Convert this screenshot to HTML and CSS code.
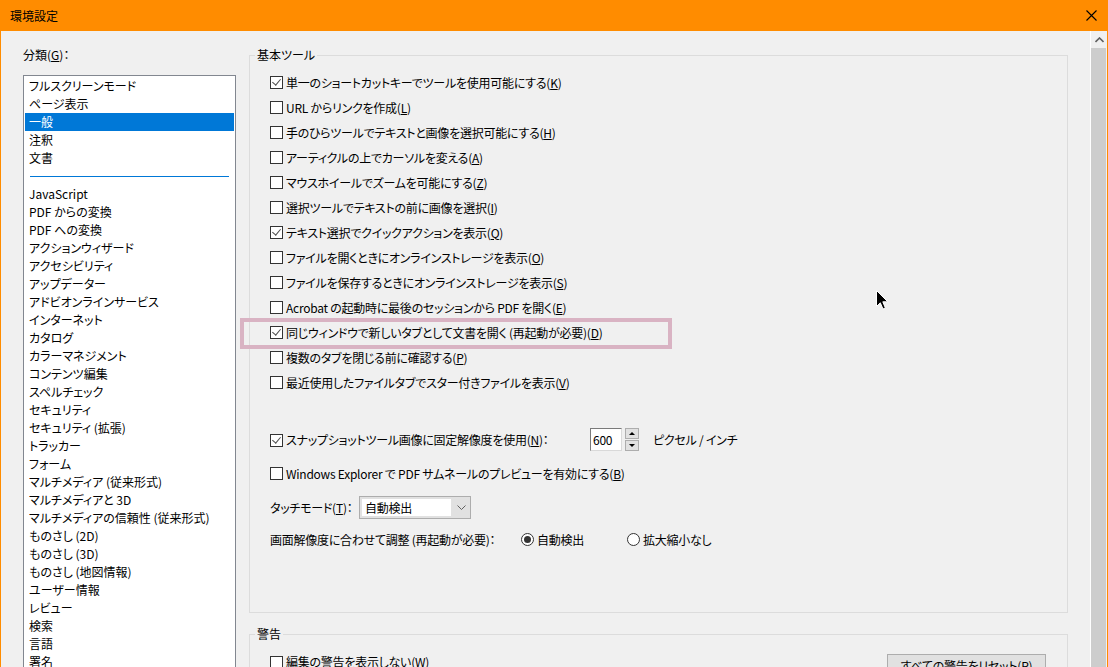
FILE: index.html
```html
<!DOCTYPE html>
<html lang="ja">
<head>
  <meta charset="UTF-8">
  <title>環境設定</title>
  <link rel="stylesheet" href="styles.css">
</head>
<body>
  <div class="window">
    <!-- Title bar -->
    <div class="titlebar">
      <span class="title">環境設定</span>
      <svg class="close" width="11" height="11" viewBox="0 0 11 11">
        <path d="M0.5 0.5 L10.5 10.5 M10.5 0.5 L0.5 10.5" stroke="#000" stroke-width="1.1" fill="none"/>
      </svg>
    </div>

    <div class="main">
      <!-- Categories -->
      <div class="sidebar">
        <div class="label">分類(<u>G</u>)：</div>
        <ul class="category-list">
          <li>フルスクリーンモード</li>
          <li>ページ表示</li>
          <li class="selected">一般</li>
          <li>注釈</li>
          <li>文書</li>
          <li class="separator"></li>
          <li>JavaScript</li>
          <li>PDF からの変換</li>
          <li>PDF への変換</li>
          <li>アクションウィザード</li>
          <li>アクセシビリティ</li>
          <li>アップデーター</li>
          <li>アドビオンラインサービス</li>
          <li>インターネット</li>
          <li>カタログ</li>
          <li>カラーマネジメント</li>
          <li>コンテンツ編集</li>
          <li>スペルチェック</li>
          <li>セキュリティ</li>
          <li>セキュリティ (拡張)</li>
          <li>トラッカー</li>
          <li>フォーム</li>
          <li>マルチメディア (従来形式)</li>
          <li>マルチメディアと 3D</li>
          <li>マルチメディアの信頼性 (従来形式)</li>
          <li>ものさし (2D)</li>
          <li>ものさし (3D)</li>
          <li>ものさし (地図情報)</li>
          <li>ユーザー情報</li>
          <li>レビュー</li>
          <li>検索</li>
          <li>言語</li>
          <li>署名</li>
        </ul>
      </div>

      <!-- Settings -->
      <div class="panel">
        <fieldset class="group">
          <legend>基本ツール</legend>
          <div class="option"><span class="cb checked"></span>単一のショートカットキーでツールを使用可能にする(<u>K</u>)</div>
          <div class="option"><span class="cb"></span>URL からリンクを作成(<u>L</u>)</div>
          <div class="option"><span class="cb"></span>手のひらツールでテキストと画像を選択可能にする(<u>H</u>)</div>
          <div class="option"><span class="cb"></span>アーティクルの上でカーソルを変える(<u>A</u>)</div>
          <div class="option"><span class="cb"></span>マウスホイールでズームを可能にする(<u>Z</u>)</div>
          <div class="option"><span class="cb"></span>選択ツールでテキストの前に画像を選択(<u>I</u>)</div>
          <div class="option"><span class="cb checked"></span>テキスト選択でクイックアクションを表示(<u>Q</u>)</div>
          <div class="option"><span class="cb"></span>ファイルを開くときにオンラインストレージを表示(<u>O</u>)</div>
          <div class="option"><span class="cb"></span>ファイルを保存するときにオンラインストレージを表示(<u>S</u>)</div>
          <div class="option"><span class="cb"></span>Acrobat の起動時に最後のセッションから PDF を開く(<u>E</u>)</div>
          <div class="option"><span class="cb checked"></span>同じウィンドウで新しいタブとして文書を開く (再起動が必要)(<u>D</u>)</div>
          <div class="option"><span class="cb"></span>複数のタブを閉じる前に確認する(<u>P</u>)</div>
          <div class="option"><span class="cb"></span>最近使用したファイルタブでスター付きファイルを表示(<u>V</u>)</div>

          <div class="option tall snapshot">
            <span class="snapshot-label"><span class="cb checked"></span>スナップショットツール画像に固定解像度を使用(<u>N</u>)：</span>
            <span class="spin-input">600</span>
            <span class="spin-buttons">
              <span class="spin-up"></span>
              <span class="spin-down"></span>
            </span>
            <span class="unit">ピクセル / インチ</span>
          </div>
          <div class="option tall"><span class="cb"></span>Windows Explorer で PDF サムネールのプレビューを有効にする(<u>B</u>)</div>
          <div class="option tall">
            <span class="touch-label">タッチモード(<u>T</u>)：</span>
            <span class="select">
              <span class="select-value">自動検出</span>
              <svg class="chevron" width="9" height="5" viewBox="0 0 9 5">
                <path d="M0.5 0.5 L4.5 4.5 L8.5 0.5" stroke="#606060" fill="none"/>
              </svg>
            </span>
          </div>
          <div class="option radio-row">
            <span class="radio-label">画面解像度に合わせて調整 (再起動が必要)：</span>
            <span class="radio checked"></span><span class="radio-text">自動検出</span>
            <span class="radio"></span><span class="radio-text">拡大縮小なし</span>
          </div>
        </fieldset>

        <fieldset class="group warning">
          <legend>警告</legend>
          <div class="option warning-row">
            <span><span class="cb"></span>編集の警告を表示しない(<u>W</u>)</span>
            <span class="button">すべての警告をリセット(<u>R</u>)</span>
          </div>
        </fieldset>
      </div>

      <!-- Scrollbar -->
      <div class="scrollbar">
        <div class="scroll-up">
          <svg width="9" height="6" viewBox="0 0 9 6">
            <path d="M0.5 5 L4.5 1 L8.5 5" stroke="#606060" stroke-width="1.6" fill="none"/>
          </svg>
        </div>
        <div class="scroll-thumb"></div>
      </div>
    </div>
  </div>

  <!-- Annotation and pointer on top of the dialog -->
  <div class="highlight"></div>
  <svg class="cursor" width="13" height="21" viewBox="0 0 13 21">
    <path d="M0.5 0.5 L0.5 16.5 L4.3 12.8 L7 19 L9.4 18 L6.8 11.8 L11.8 11.8 Z" fill="#000" stroke="#fff" stroke-width="1"/>
  </svg>
</body>
</html>
```

FILE: styles.css
```css
body {
  margin: 0;
  padding: 0;
  width: 1108px;
  height: 667px;
  overflow: hidden;
  font-family: "Noto Sans CJK JP", "Noto Sans", sans-serif;
  font-size: 12px;
  font-feature-settings: "palt";
  color: #000;
  background: #f0f0f0;
}

u {
  text-decoration: underline;
  text-underline-offset: 1px;
}

.window {
  height: 667px;
  border-left: 1px solid #ff8c00;
  border-right: 1px solid #ff8c00;
  background: #f0f0f0;
  display: flex;
  flex-direction: column;
}

/* Title bar */
.titlebar {
  height: 31px;
  flex: none;
  background: #ff8c00;
  display: flex;
  align-items: center;
  justify-content: space-between;
  padding: 0 10px 0 9px;
}

.title {
  font-size: 12px;
  line-height: 31px;
}

.main {
  flex: 1;
  display: flex;
  min-height: 0;
}

/* Category list */
.sidebar {
  width: 248px;
  flex: none;
  padding: 15px 0 0 22px;
  box-sizing: border-box;
}

.label {
  line-height: 18px;
  margin-bottom: 11px;
}

.category-list {
  list-style: none;
  margin: 0;
  padding: 1px;
  width: 213px;
  box-sizing: border-box;
  background: #fff;
  border: 1px solid #828790;
  height: 700px;
}

.category-list li {
  line-height: 18px;
  height: 18px;
  padding-left: 4px;
  white-space: nowrap;
}

.category-list .selected {
  background: #0078d7;
  color: #fff;
}

.category-list .separator {
  padding: 0;
  margin: 0 5px;
  display: flex;
  align-items: center;
}

.category-list .separator::after {
  content: "";
  flex: 1;
  height: 1px;
  background: #0078d7;
  margin-top: 1px;
}

/* Settings panel */
.panel {
  flex: 1;
  padding: 15px 22px 0 0;
  box-sizing: border-box;
}

.group {
  margin: 0;
  padding: 6px 0 58px 0;
  border: 1px solid #dcdcdc;
  min-width: 0;
  letter-spacing: -0.25px;
}

.group legend {
  padding: 0 2px;
  margin-left: 5px;
  line-height: 18px;
  letter-spacing: 0;
}

.group.warning {
  margin-top: 12px;
  padding-bottom: 20px;
}

.option {
  height: 25px;
  margin-left: 20px;
  display: flex;
  align-items: center;
  white-space: nowrap;
}

.option.tall {
  height: 34px;
}

.option.snapshot {
  margin-top: 27px;
}

.cb {
  display: inline-block;
  width: 13px;
  height: 13px;
  box-sizing: border-box;
  border: 1px solid #333;
  background: #fff;
  margin-right: 3px;
  vertical-align: -2px;
  position: relative;
  flex: none;
}

.cb.checked::after {
  content: "";
  position: absolute;
  left: 3px;
  top: 0px;
  width: 4px;
  height: 7px;
  border-right: 1.5px solid #4d4d4d;
  border-bottom: 1.5px solid #4d4d4d;
  transform: rotate(40deg);
}

/* Snapshot resolution */
.snapshot-label {
  width: 320px;
  flex: none;
}

.spin-input {
  width: 32px;
  height: 23px;
  box-sizing: border-box;
  border: 1px solid #7a7a7a;
  border-right-color: #d9d9d9;
  border-bottom-color: #d9d9d9;
  background: #fff;
  padding-left: 2px;
  line-height: 21px;
}

.spin-buttons {
  display: flex;
  flex-direction: column;
  width: 14px;
  height: 23px;
  margin-left: 3px;
  gap: 1px;
}

.spin-up,
.spin-down {
  flex: 1;
  background: #e1e1e1;
  border: 1px solid #adadad;
  position: relative;
}

.spin-up::after,
.spin-down::after {
  content: "";
  position: absolute;
  left: 3px;
  top: 3px;
  border-left: 3px solid transparent;
  border-right: 3px solid transparent;
}

.spin-up::after {
  border-bottom: 3px solid #000;
}

.spin-down::after {
  border-top: 3px solid #000;
}

.unit {
  margin-left: 14px;
}

/* Touch mode */
.touch-label {
  width: 89px;
  flex: none;
}

.select {
  width: 112px;
  height: 23px;
  box-sizing: border-box;
  border: 1px solid #adadad;
  background: #e1e1e1;
  padding: 2px;
  display: flex;
  align-items: center;
}

.select-value {
  width: 89px;
  height: 17px;
  line-height: 17px;
  background: #fff;
  padding-left: 3px;
  box-sizing: border-box;
}

.chevron {
  margin-left: 6px;
}

/* Scaling radios */
.radio-row {
  height: 30px;
}

.radio-label {
  width: 251px;
  flex: none;
}

.radio {
  width: 13px;
  height: 13px;
  box-sizing: border-box;
  border: 1px solid #333;
  border-radius: 50%;
  background: #fff;
  margin-right: 3px;
  position: relative;
  flex: none;
}

.radio.checked::after {
  content: "";
  position: absolute;
  left: 2px;
  top: 2px;
  width: 7px;
  height: 7px;
  border-radius: 50%;
  background: #333;
}

.radio-text {
  width: 90px;
}

/* Warnings */
.warning-row {
  justify-content: space-between;
  align-items: flex-start;
  padding-top: 4px;
  height: 30px;
  box-sizing: border-box;
}

.button {
  margin-right: 21px;
  margin-top: 1px;
  width: 159px;
  height: 24px;
  box-sizing: border-box;
  border: 1px solid #adadad;
  background: #e1e1e1;
  text-align: center;
  line-height: 22px;
}

/* Scrollbar */
.scrollbar {
  width: 17px;
  flex: none;
  background: #f0f0f0;
  border-left: 1px solid #fff;
  box-sizing: border-box;
  display: flex;
  flex-direction: column;
}

.scroll-up {
  height: 17px;
  display: flex;
  align-items: center;
  justify-content: center;
}

.scroll-thumb {
  flex: 1;
  background: #cdcdcd;
  margin: 0 1px 0 0;
}

/* Overlays */
.highlight {
  position: absolute;
  left: 240px;
  top: 318px;
  width: 432px;
  height: 31px;
  box-sizing: border-box;
  border: 4px solid #d9b3c3;
}

.cursor {
  position: absolute;
  left: 876px;
  top: 290px;
}
```
